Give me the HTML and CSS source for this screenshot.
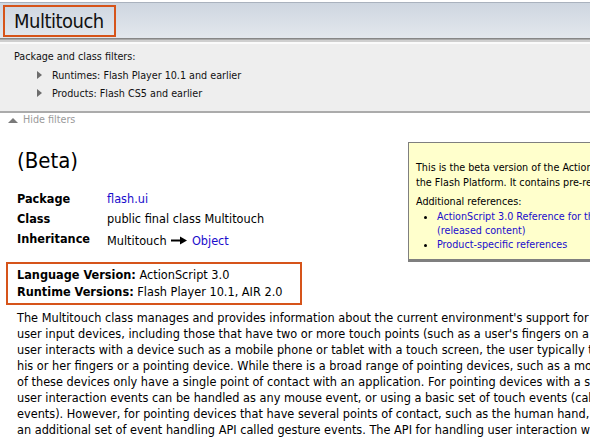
FILE: index.html
```html
<!DOCTYPE html>
<html lang="en">
  <head>
    <meta charset="UTF-8" />
    <meta name="viewport" content="width=device-width, initial-scale=1.0" />
    <title>Multitouch</title>
    <link rel="stylesheet" href="styles.css">
  </head>
  <body>
    <div class="title-bar">
      <h1 class="title">Multitouch</h1>
    </div>

    <div class="filters">
      <div class="filters-label">Package and class filters:</div>
      <ul class="filter-list">
        <li><span class="arrow"></span>Runtimes: Flash Player 10.1 and earlier</li>
        <li><span class="arrow"></span>Products: Flash CS5 and earlier</li>
      </ul>
    </div>
    <div class="hide-filters"><span class="arrow-up"></span>Hide filters</div>

    <div class="top-section">
      <div class="class-info">
        <h2 class="beta">(Beta)</h2>
        <table class="class-table">
          <tr>
            <th>Package</th>
            <td><a href="#">flash.ui</a></td>
          </tr>
          <tr>
            <th>Class</th>
            <td>public final class Multitouch</td>
          </tr>
          <tr>
            <th>Inheritance</th>
            <td>
              Multitouch
              <svg class="inherit-arrow" width="16" height="9" viewBox="0 0 16 9">
                <path d="M0 4.5 H10" stroke="#000" stroke-width="2" />
                <path d="M9 0.5 L16 4.5 L9 8.5 Z" fill="#000" />
              </svg>
              <a href="#">Object</a>
            </td>
          </tr>
        </table>
      </div>

      <div class="beta-note">
        <p>This is the beta version of the ActionScript 3.0 Reference for<br />
          the Flash Platform. It contains pre-release content.</p>
        <p class="refs-label">Additional references:</p>
        <ul>
          <li><a href="#">ActionScript 3.0 Reference for the Adobe Flash Platform<br />(released content)</a></li>
          <li><a href="#">Product-specific references</a></li>
        </ul>
      </div>
    </div>

    <div class="versions">
      <div><b>Language Version:</b> ActionScript 3.0</div>
      <div><b>Runtime Versions:</b> Flash Player 10.1, AIR 2.0</div>
    </div>

    <p class="description">
      The Multitouch class manages and provides information about the current environment's support for handling contact from<br />
      user input devices, including those that have two or more touch points (such as a user's fingers on a touch screen). When a<br />
      user interacts with a device such as a mobile phone or tablet with a touch screen, the user typically touches the screen with<br />
      his or her fingers or a pointing device. While there is a broad range of pointing devices, such as a mouse or a stylus, many<br />
      of these devices only have a single point of contact with an application. For pointing devices with a single point of contact,<br />
      user interaction events can be handled as any mouse event, or using a basic set of touch events (called "touch point"<br />
      events). However, for pointing devices that have several points of contact, such as the human hand, the runtimes support<br />
      an additional set of event handling API called gesture events. The API for handling user interaction with these gesture
    </p>
  </body>
</html>
```

FILE: styles.css
```css
html,
body {
  margin: 0;
  padding: 0;
  overflow: hidden;
}
body {
  font-family: "DejaVu Sans Condensed", "DejaVu Sans", sans-serif;
  font-size: 12.6px;
  color: #000;
  background-color: #fff;
  width: 590px;
}
a {
  color: #1a0dcc;
  text-decoration: none;
}

/* title bar */
.title-bar {
  height: 32px;
  padding-top: 3px;
  border-top: 1px solid #aab2be;
  background: linear-gradient(#ced6e0, #e3e7ed);
  border-bottom: 1px solid #878787;
  box-shadow: 0 1px 0 #a9a9a9, 0 3px 0 #cfcfcf, 0 5px 0 #fafafa;
  margin-top: 2px;
  margin-bottom: 5px;
}
.title {
  display: inline-block;
  margin: 0 0 0 3px;
  padding: 1px 10px 0 9px;
  height: 27px;
  border: 2px solid #d6541a;
  font-size: 20px;
  letter-spacing: -0.5px;
  font-weight: normal;
  line-height: 27px;
  color: #101010;
  position: relative;
  top: -1px;
}

/* filters */
.filters {
  background-color: #eeeeee;
  border-bottom: 2px solid #ababab;
  padding: 6px 14px 9px;
  font-size: 10.7px;
  color: #111;
}
.filters-label {
  line-height: 14px;
}
.filter-list {
  list-style: none;
  margin: 2px 0 0;
  padding: 0 0 0 23px;
}
.filter-list li {
  height: 18px;
  display: flex;
  align-items: center;
}
.arrow {
  display: inline-block;
  width: 0;
  height: 0;
  border-top: 4px solid transparent;
  border-bottom: 4px solid transparent;
  border-left: 5px solid #6c6c6c;
  margin-right: 10px;
}
.hide-filters {
  font-size: 10.7px;
  color: #9a9a9a;
  padding: 0 0 0 8px;
  line-height: 14px;
  display: flex;
  align-items: center;
}
.arrow-up {
  display: inline-block;
  width: 0;
  height: 0;
  border-left: 5.5px solid transparent;
  border-right: 5.5px solid transparent;
  border-bottom: 5px solid #7a7a7a;
  margin-right: 5px;
}

/* class summary */
.top-section {
  display: flex;
  align-items: flex-start;
}
.class-info {
  width: 391px;
  padding-left: 17px;
  flex-shrink: 0;
}
.beta {
  font-size: 22px;
  font-weight: normal;
  margin: 21px 0 15px;
  line-height: 26px;
}
.class-table {
  border-collapse: collapse;
}
.class-table th {
  text-align: left;
  font-weight: bold;
  width: 90px;
  padding: 0;
  line-height: 20px;
  vertical-align: top;
}
.class-table td {
  padding: 0;
  line-height: 20px;
}
.class-table tr:last-child td {
  padding-top: 2px;
}
.inherit-arrow {
  vertical-align: 0;
  margin: 0 1px;
}

.beta-note {
  margin-top: 15px;
  width: 300px;
  flex-shrink: 0;
  background-color: #ffffcc;
  border: 1px solid #7f7f7f;
  border-bottom: 3px solid #7f7f7f;
  padding: 17px 0 7px 7px;
  font-size: 10.7px;
  white-space: nowrap;
}
.beta-note p {
  margin: 0;
  line-height: 15px;
}
.beta-note .refs-label {
  margin-top: 4px;
  margin-bottom: 1px;
}
.beta-note ul {
  margin: 0;
  padding-left: 21px;
}
.beta-note li {
  line-height: 14px;
}

/* versions */
.versions {
  margin: 0 0 0 6px;
  width: 283px;
  border: 2px solid #d6541a;
  padding: 2px 0 3px 9px;
  line-height: 17px;
}

.description {
  margin: 5px 0 0 17px;
  white-space: nowrap;
  line-height: 16px;
}
```
